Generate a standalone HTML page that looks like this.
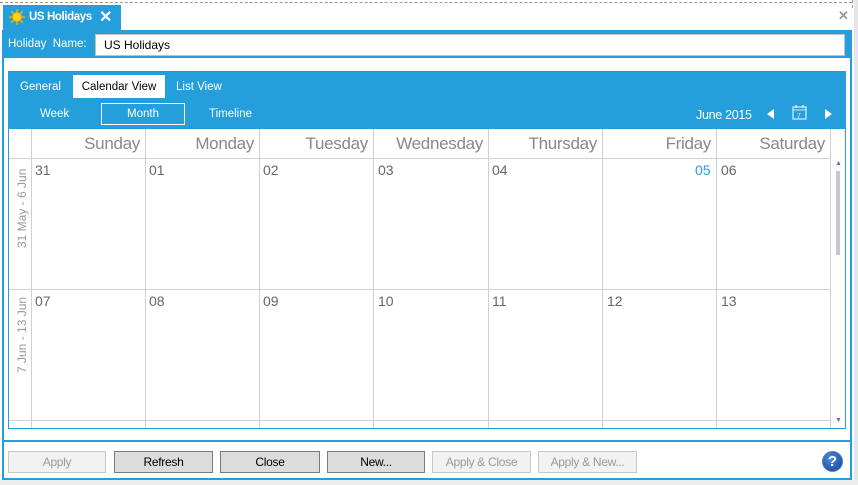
<!DOCTYPE html>
<html><head><meta charset="utf-8"><style>
*{box-sizing:border-box;margin:0;padding:0}
body{width:858px;height:485px;background:#fff;font-family:"Liberation Sans",sans-serif;position:relative;overflow:hidden;font-size:12px}
.a{position:absolute}
.blue{background:#259fdb}
.btn{position:absolute;top:451px;height:22px;border:1px solid #7a7a7a;background:#dcdcdc;color:#000;font-size:12px;text-align:center;line-height:20px;letter-spacing:-0.3px}
.dis{border-color:#c8c8c8;background:#f2f2f2;color:#9a9a9a}
.day{position:absolute;top:129px;height:29px;font-size:17px;color:#888;text-align:right;line-height:30px;padding-right:5px;letter-spacing:-0.3px}
.num{position:absolute;font-size:14px;color:#666}
.vl{position:absolute;width:1px;background:#d0d0d0}
.hl{position:absolute;height:1px;background:#d0d0d0}
</style></head><body>
<div class="a" style="left:0;top:2px;width:852px;border-top:1px dashed #999"></div>
<div class="a" style="left:852px;top:0;width:1px;height:8px;border-left:1px dashed #999"></div>
<div class="a" style="left:854px;top:0;width:4px;height:485px;background:#e6e6e6"></div>
<div class="a" style="left:0;top:480px;width:858px;height:5px;background:#ececec"></div>
<div class="a blue" style="left:3px;top:5px;width:118px;height:26px"></div>
<svg class="a" style="left:9px;top:9px" width="16" height="16" viewBox="0 0 18 18"><g stroke="#f5b800" stroke-width="1.5"><line x1="9" y1="0" x2="9" y2="18"/><line x1="0" y1="9" x2="18" y2="9"/><line x1="2.5" y1="2.5" x2="15.5" y2="15.5"/><line x1="15.5" y1="2.5" x2="2.5" y2="15.5"/></g><circle cx="9" cy="9" r="5" fill="#ffd21a" stroke="#f0a800"/></svg>
<div class="a" style="left:29px;top:11px;color:#fff;font-weight:bold;font-size:11.5px;letter-spacing:-0.4px">US Holidays</div>
<div class="a" style="left:99px;top:7px;color:#fff;font-size:16px;font-weight:bold">✕</div>
<div class="a" style="left:838px;top:8px;color:#999;font-size:13px;font-weight:bold">✕</div>
<div class="a blue" style="left:2px;top:30px;width:850px;height:28px"></div>
<div class="a" style="left:8px;top:38px;color:#fff;font-size:11.5px">Holiday&nbsp; Name:</div>
<div class="a" style="left:95px;top:34px;width:750px;height:22px;background:#fff;border:1px solid #c0c0c0;padding:3px 8px;font-size:12px">US Holidays</div>
<div class="a" style="left:2px;top:58px;width:2px;height:422px;background:#259fdb"></div>
<div class="a" style="left:850px;top:58px;width:2px;height:422px;background:#259fdb"></div>
<div class="a" style="left:2px;top:478px;width:850px;height:2px;background:#259fdb"></div>
<div class="a" style="left:2px;top:440px;width:850px;height:2px;background:#259fdb"></div>
<div class="a" style="left:8px;top:71px;width:838px;height:358px;border:1px solid #259fdb"></div>
<div class="a blue" style="left:8px;top:71px;width:838px;height:58px"></div>
<div class="a" style="left:20px;top:81px;color:#fff;font-size:11.5px">General</div>
<div class="a" style="left:73px;top:75px;width:92px;height:23px;background:#fff;color:#000;text-align:center;line-height:24px;font-size:11.5px">Calendar View</div>
<div class="a" style="left:176px;top:81px;color:#fff;font-size:11.5px">List View</div>
<div class="a" style="left:40px;top:108px;color:#fff;font-size:11.5px">Week</div>
<div class="a" style="left:101px;top:103px;width:84px;height:22px;border:1px solid #fff;color:#fff;text-align:center;line-height:21px;font-size:11.5px">Month</div>
<div class="a" style="left:209px;top:108px;color:#fff;font-size:11.5px">Timeline</div>
<div class="a" style="left:696px;top:108px;color:#fff;font-size:12.5px;letter-spacing:-0.3px">June 2015</div>
<div class="a" style="left:767px;top:109px;width:0;height:0;border-top:5px solid transparent;border-bottom:5px solid transparent;border-right:7px solid #fff"></div>
<svg class="a" style="left:792px;top:104px" width="15" height="16" viewBox="0 0 15 16"><rect x="1" y="3" width="13" height="12" fill="none" stroke="#cfe9f7" stroke-width="1.3"/><line x1="1" y1="6" x2="14" y2="6" stroke="#cfe9f7"/><line x1="4" y1="1" x2="4" y2="4" stroke="#cfe9f7" stroke-width="1.5"/><line x1="11" y1="1" x2="11" y2="4" stroke="#cfe9f7" stroke-width="1.5"/><text x="5" y="14" font-size="7" fill="#cfe9f7" font-family="Liberation Sans">7</text></svg>
<div class="a" style="left:825px;top:109px;width:0;height:0;border-top:5px solid transparent;border-bottom:5px solid transparent;border-left:7px solid #fff"></div>
<div class="hl" style="left:9px;top:158px;width:821px"></div>
<div class="hl" style="left:9px;top:289px;width:821px"></div>
<div class="hl" style="left:9px;top:420px;width:821px"></div>
<div class="vl" style="left:31px;top:129px;height:299px"></div>
<div class="vl" style="left:145px;top:129px;height:299px"></div>
<div class="vl" style="left:259px;top:129px;height:299px"></div>
<div class="vl" style="left:373px;top:129px;height:299px"></div>
<div class="vl" style="left:488px;top:129px;height:299px"></div>
<div class="vl" style="left:602px;top:129px;height:299px"></div>
<div class="vl" style="left:716px;top:129px;height:299px"></div>
<div class="vl" style="left:830px;top:129px;height:299px"></div>
<div class="day" style="left:31px;width:114px">Sunday</div>
<div class="day" style="left:145px;width:114px">Monday</div>
<div class="day" style="left:259px;width:114px">Tuesday</div>
<div class="day" style="left:373px;width:115px">Wednesday</div>
<div class="day" style="left:488px;width:114px">Thursday</div>
<div class="day" style="left:602px;width:114px">Friday</div>
<div class="day" style="left:716px;width:114px">Saturday</div>
<div class="num" style="left:35px;top:162px">31</div>
<div class="num" style="left:149px;top:162px">01</div>
<div class="num" style="left:263px;top:162px">02</div>
<div class="num" style="left:378px;top:162px">03</div>
<div class="num" style="left:492px;top:162px">04</div>
<div class="num" style="left:695px;top:162px;color:#259fdb">05</div>
<div class="num" style="left:721px;top:162px">06</div>
<div class="num" style="left:35px;top:293px">07</div>
<div class="num" style="left:149px;top:293px">08</div>
<div class="num" style="left:263px;top:293px">09</div>
<div class="num" style="left:378px;top:293px">10</div>
<div class="num" style="left:492px;top:293px">11</div>
<div class="num" style="left:607px;top:293px">12</div>
<div class="num" style="left:721px;top:293px">13</div>
<div class="a" style="left:15px;top:248px;transform:rotate(-90deg);transform-origin:0 0;color:#999;font-size:12px;white-space:nowrap">31 May - 6 Jun</div>
<div class="a" style="left:15px;top:373px;transform:rotate(-90deg);transform-origin:0 0;color:#999;font-size:12px;white-space:nowrap">7 Jun - 13 Jun</div>
<div class="a" style="left:835px;top:160px;color:#777;font-size:7px">▲</div>
<div class="a" style="left:836px;top:171px;width:4px;height:84px;background:#c8c8c8"></div>
<div class="a" style="left:835px;top:417px;color:#777;font-size:7px">▼</div>
<div class="btn dis" style="left:8px;width:98px">Apply</div>
<div class="btn" style="left:114px;width:99px">Refresh</div>
<div class="btn" style="left:220px;width:100px">Close</div>
<div class="btn" style="left:327px;width:98px">New...</div>
<div class="btn dis" style="left:432px;width:99px">Apply &amp; Close</div>
<div class="btn dis" style="left:538px;width:99px">Apply &amp; New...</div>
<div class="a" style="left:822px;top:451px;width:21px;height:21px;border-radius:50%;background:radial-gradient(circle at 40% 35%,#4d8fe0,#0a3e9a);border:1px solid #5a7fb5;color:#fff;font-weight:bold;font-size:15px;text-align:center;line-height:20px">?</div>
</body></html>
